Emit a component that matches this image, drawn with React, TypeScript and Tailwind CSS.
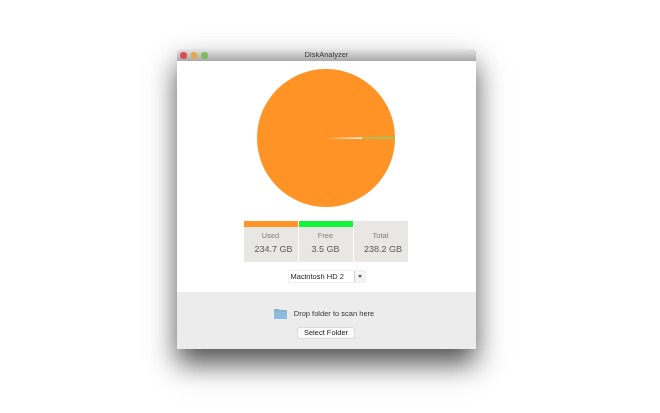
const stats = [
  { label: 'Used', value: '234.7 GB', bar: 'bg-[#ff9326]', shift: 'ml-[6px]' },
  { label: 'Free', value: '3.5 GB', bar: 'bg-[#12f53a]', shift: 'ml-0' },
  { label: 'Total', value: '238.2 GB', bar: 'bg-[#e8e7e3]', shift: 'ml-[5px]' },
]

function PieChart() {
  return (
    <svg width="138" height="138" viewBox="0 0 138 138" className="block">
      <circle cx="69" cy="69" r="69" fill="#ff9326" />
      {/* free space slice is only a sliver */}
      <path d="M69 69.2 L138 68 L138 69.6 Z" fill="#6fe07c" />
      <path d="M69 69 L105 68.6 L105 70 Z" fill="#fff8ee" />
    </svg>
  )
}

function FolderIcon() {
  return (
    <svg width="13" height="10" viewBox="0 0 13 10" className="block">
      <path d="M0 1 Q0 0 1 0 H4.5 L5.5 1 H12 Q13 1 13 2 V9 Q13 10 12 10 H1 Q0 10 0 9 Z" fill="#86aecb" />
      <rect x="0" y="2.5" width="13" height="7.5" rx="0.5" fill="#8cbbdb" />
    </svg>
  )
}

export default function App() {
  return (
    <div className="w-[660px] h-[413px] bg-white overflow-hidden pt-[49px] pl-[177px] font-['Liberation_Sans',sans-serif]">
      <div className="w-[299px] h-[300px] flex flex-col blur-[0.35px] shadow-[0_15px_26px_rgba(0,0,0,0.68)]">
        {/* Title bar */}
        <div className="h-[12px] relative flex items-center justify-center bg-gradient-to-b from-[#e6e6e6] to-[#a9a9a9] rounded-t-[3px]">
          <div className="absolute left-[3px] top-[3px] flex gap-[4px]">
            <div className="w-[6.5px] h-[6.5px] rounded-full bg-[#dd4a55]" />
            <div className="w-[6.5px] h-[6.5px] rounded-full bg-[#e0a94a]" />
            <div className="w-[6.5px] h-[6.5px] rounded-full bg-[#7cbb5c]" />
          </div>
          <span className="text-[7.5px] leading-none text-[#3a3a3a]">DiskAnalyzer</span>
        </div>

        {/* Main area */}
        <div className="h-[231px] bg-white flex flex-col items-center pt-[8px]">
          <div className="mr-[2px]">
            <PieChart />
          </div>

          <div className="flex gap-px mt-[14px] mr-[2px]">
            {stats.map((stat) => (
              <div key={stat.label} className="w-[54px] h-[41px] bg-[#e8e7e3] flex flex-col items-center">
                <div className={`w-full h-[6px] ${stat.bar}`} />
                <span className="text-[7.5px] leading-none mt-[5px] text-[#7d7d7a]">{stat.label}</span>
                <span className={`text-[9px] leading-none mt-[5px] text-[#5a5a58] ${stat.shift}`}>{stat.value}</span>
              </div>
            ))}
          </div>

          <div className="flex mt-[9px] h-[11px] w-[76px] shadow-[0_0_1px_rgba(0,0,0,0.4)]">
            <div className="w-[66px] flex items-center pl-[2px] bg-white border-r border-[#cfcfcf] text-[7.5px] leading-none text-[#222]">
              Macintosh HD 2
            </div>
            <div className="flex-1 flex items-center justify-center bg-[#f4f4f4]">
              <div className="w-0 h-0 border-x-[2px] border-x-transparent border-t-[3px] border-t-[#555]" />
            </div>
          </div>
        </div>

        {/* Drop zone */}
        <div className="h-[57px] bg-[#ececec] flex flex-col items-center">
          <div className="flex items-center mt-[17px] mr-[5px] gap-[7px]">
            <FolderIcon />
            <span className="text-[7.5px] leading-none text-[#333]">Drop folder to scan here</span>
          </div>
          <button className="mt-[9px] mr-[1px] w-[56px] h-[10px] bg-[#fafafa] rounded-[1px] shadow-[0_0_1px_rgba(0,0,0,0.7)] text-[7.5px] leading-none text-[#222]">
            Select Folder
          </button>
        </div>
      </div>
    </div>
  )
}
